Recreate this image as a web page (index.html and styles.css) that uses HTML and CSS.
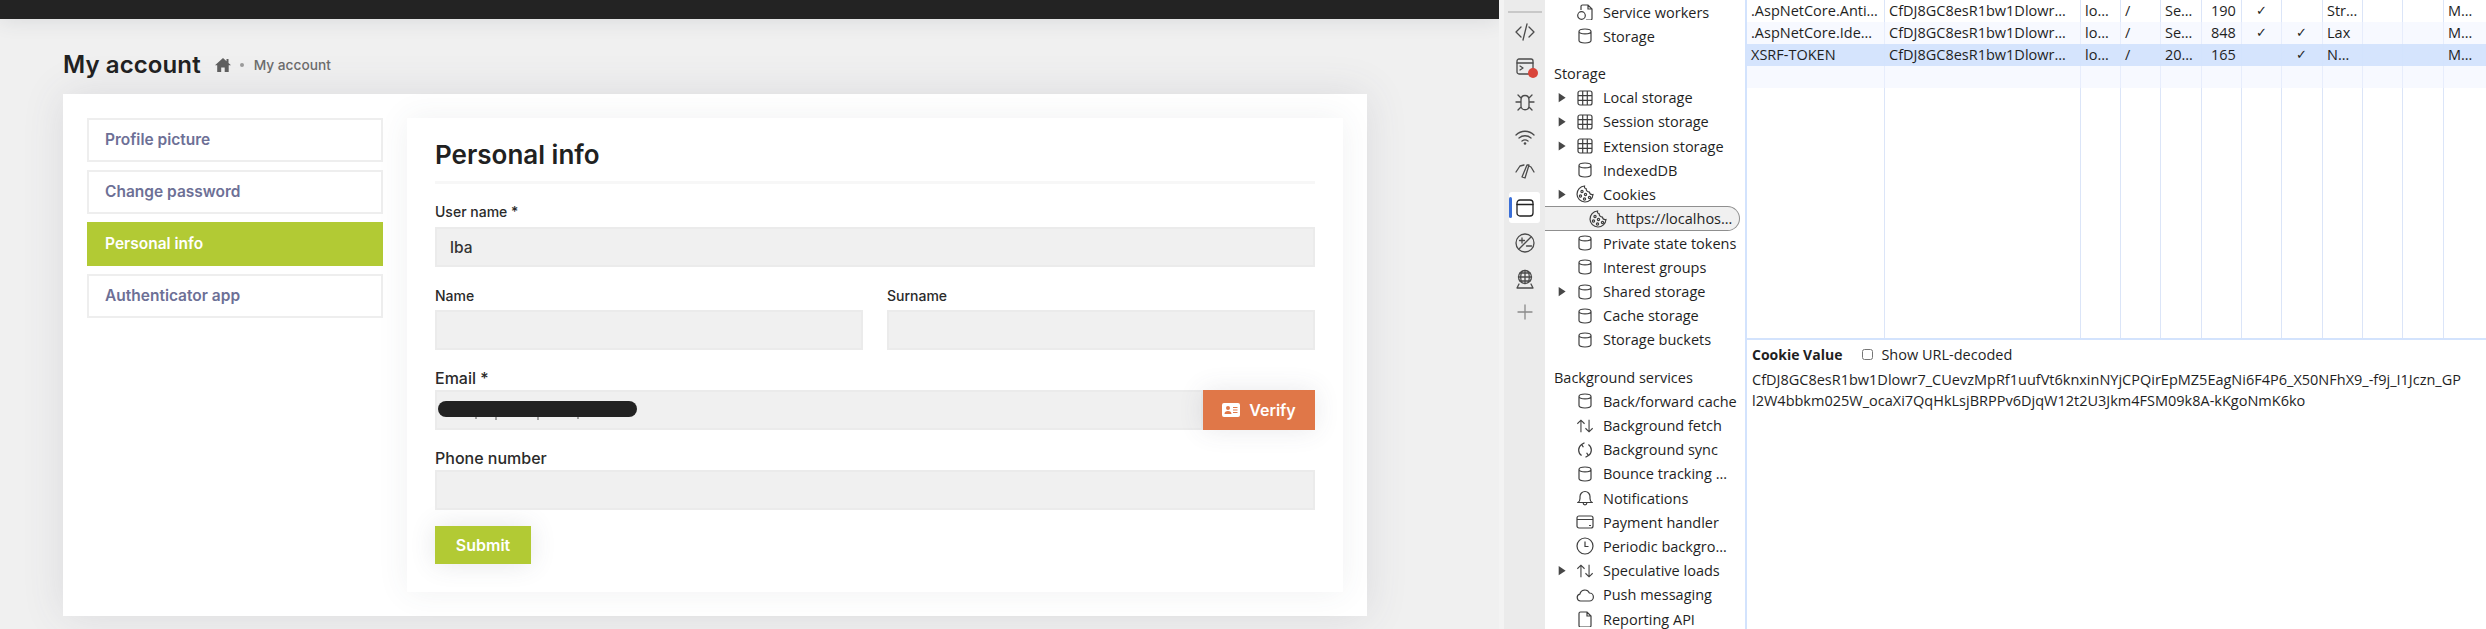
FILE: index.html
```html
<!DOCTYPE html>
<html lang="en">
<head>
<meta charset="utf-8">
<title>My account</title>
<link rel="stylesheet" href="styles.css">
</head>
<body>
<svg class="defs" width="0" height="0" aria-hidden="true">
  <symbol id="db" viewBox="0 0 16 16"><path d="M2 3.400C2 1.900 4.700 1 8 1s6 .9 6 2.400-2.700 2.400-6 2.400-6-.9-6-2.400zM2 3.400v9.200C2 14.100 4.700 15 8 15s6-.9 6-2.400V3.400"/></symbol>
  <symbol id="grid" viewBox="0 0 16 16"><rect x="1" y="1" width="14" height="14" rx="2"/><path d="M5.700 1v14M10.300 1v14M1 5.700h14M1 10.300h14"/></symbol>
  <symbol id="cookie" viewBox="0 0 18 18"><path d="M8.500 1A8 8 0 1 0 17 9.500c-1.800.3-3.300-.7-3.600-2.400C11.600 7 10 5.600 10.200 3.800 9 3.800 8.200 2.500 8.500 1z"/><g class="fill"><circle cx="6" cy="6.500" r="1.100"/><circle cx="4.500" cy="11" r="1.100"/><circle cx="9.500" cy="9.500" r="1.100"/><circle cx="8.500" cy="14" r="1.100"/><circle cx="13.500" cy="12.500" r="1.100"/></g></symbol>
  <symbol id="updown" viewBox="0 0 20 16"><path d="M5.500 15V1.500M1.500 5.500l4-4 4 4M14.500 1v13.500M10.500 10.500l4 4 4-4"/></symbol>
  <symbol id="sync" viewBox="0 0 16 16"><path d="M4.600 2.400a6.800 6.800 0 0 0 0 11.200M11.400 13.600a6.800 6.800 0 0 0 0-11.200"/><path d="M7.500.8 4.600 2.400l1.800 2.800M8.500 15.200l2.900-1.600-1.800-2.800"/></symbol>
  <symbol id="bell" viewBox="0 0 16 16"><path d="M1 12.500c1.400-1 2-2.200 2-4V6.500a5 5 0 0 1 10 0v2c0 1.800.6 3 2 4zM6.200 13c0 2.400 3.600 2.400 3.600 0"/></symbol>
  <symbol id="card" viewBox="0 0 18 14"><rect x="1" y="1" width="16" height="12" rx="2"/><path d="M1 4.500h16M13 10.500h2"/></symbol>
  <symbol id="clock" viewBox="0 0 18 18"><circle cx="9" cy="9" r="8"/><path d="M9 4.500V9.500h3.500"/></symbol>
  <symbol id="cloud" viewBox="0 0 18 14"><path d="M4.500 13a3.500 3.500 0 0 1-.6-6.900A5 5 0 0 1 13.400 5a4 4 0 0 1 0 8z"/></symbol>
  <symbol id="doc" viewBox="0 0 14 16"><path d="M1 2.500A1.500 1.500 0 0 1 2.500 1H9l4 4v9.500a1.500 1.500 0 0 1-1.500 1.500h-9A1.500 1.500 0 0 1 1 14.500zM9 1v4h4"/></symbol>
  <symbol id="worker" viewBox="0 0 16 16"><path d="M4 6V2.500A1.500 1.500 0 0 1 5.500 1H11l4 4v9.500a1.500 1.500 0 0 1-1.500 1.500H9M11 1v4h4"/><circle class="fill" cx="4.500" cy="11.500" r="3.800"/></symbol>
</svg>

<div class="screen">
  <main class="page">
    <div class="topbar"></div>
    <div class="content">
      <header class="crumbs">
        <h1 class="title">My account</h1>
        <svg class="home" viewBox="0 0 16 14"><path d="M8 0 0 7.200h2.200V14h4V9.500h3.500V14h4V7.200H16L13.500 5V1h-2v2.200z"/></svg>
        <span class="dot"></span>
        <span class="crumb">My account</span>
      </header>
      <section class="card">
        <nav class="menu">
          <a class="menu-item">Profile picture</a>
          <a class="menu-item">Change password</a>
          <a class="menu-item active">Personal info</a>
          <a class="menu-item">Authenticator app</a>
        </nav>
        <form class="panel">
          <h2 class="panel-title">Personal info</h2>
          <div class="field first">
            <label class="label">User name *</label>
            <input class="input" value="lba" readonly>
          </div>
          <div class="two">
            <div class="field tight">
              <label class="label small">Name</label>
              <input class="input" readonly>
            </div>
            <div class="field tight">
              <label class="label small">Surname</label>
              <input class="input" readonly>
            </div>
          </div>
          <div class="field large">
            <label class="label big">Email *</label>
            <div class="input-group">
              <input class="input" readonly>
              <svg class="scribble" viewBox="0 0 199 19"><rect width="199" height="16" rx="8"/><path d="M38 16v2M58 16v3M100 16v3M140 16v2"/></svg>
              <button class="btn verify" type="button">
                <svg class="id" viewBox="0 0 18 14"><path fill-rule="evenodd" d="M2 0h14a2 2 0 0 1 2 2v10a2 2 0 0 1-2 2H2a2 2 0 0 1-2-2V2a2 2 0 0 1 2-2zm4 3a2 2 0 1 0 0 4 2 2 0 0 0 0-4zM2.500 11h7c0-2-1.300-3-3.500-3s-3.500 1-3.500 3zM11 4v1h4.500V4zm0 2.500v1h4.500v-1zM11 9v1h4.500V9z"/></svg>
                Verify
              </button>
            </div>
          </div>
          <div class="field large">
            <label class="label big">Phone number</label>
            <input class="input" readonly>
          </div>
          <button class="btn submit" type="button">Submit</button>
        </form>
      </section>
    </div>
  </main>

  <div class="gutter"></div>

  <aside class="activity">
    <div class="activity-top"></div>
    <svg class="act" viewBox="0 0 20 20"><path d="M6 5 1 10l5 5M14 5l5 5-5 5M12 2 8 18"/></svg>
    <span class="act-wrap">
      <svg class="act" viewBox="0 0 20 20"><rect x="2" y="2" width="16" height="15" rx="2"/><path d="M2 6h16M5 9l3 2-3 2"/></svg>
      <span class="badge"></span>
    </span>
    <svg class="act" viewBox="0 0 20 20"><path d="M6 8c0-6 8-6 8 0v6c0 5-8 5-8 0zM6 6 3 3M14 6l3-3M6 10H1M14 10h5M6 15l-3 3M14 15l3 3"/></svg>
    <svg class="act" viewBox="0 0 20 20"><path d="M1 8c5-5 13-5 18 0M4 11c3.500-3 8.500-3 12 0M7 14c2-1.500 4-1.500 6 0"/><circle class="solid" cx="10" cy="16.500" r="1.300"/></svg>
    <svg class="act gauge" viewBox="0 0 20 20"><path d="M1 12 5 6l4-1M19 12l-3-5-2-1M7 17l5-12 2 0-4 13z"/></svg>
    <span class="act-selected">
      <svg class="act" viewBox="0 0 20 20"><rect x="2" y="2" width="16" height="16" rx="3"/><path d="M2 6.500h16"/></svg>
    </span>
    <svg class="act perf" viewBox="0 0 20 20"><circle cx="10" cy="10" r="9"/><path d="M4 16 16 4M4.500 7.500h5M7 5v5M11.500 13h5"/></svg>
    <svg class="act" viewBox="0 0 20 20"><circle cx="10" cy="8" r="6.500"/><path d="M3.500 8h13M10 1.500v13M5 4h10M5 12h10M7 2.500c-2 4-2 7 0 11M13 2.500c2 4 2 7 0 11M4 15l-2 4h16l-2-4"/></svg>
    <svg class="act plus" viewBox="0 0 20 20"><path d="M10 3v14M3 10h14"/></svg>
  </aside>

  <aside class="tree">
    <div class="row"><i class="caret-slot"></i><svg class="ico"><use href="#worker"/></svg>Service workers</div>
    <div class="row"><i class="caret-slot"></i><svg class="ico"><use href="#db"/></svg>Storage</div>
    <div class="row heading">Storage</div>
    <div class="row"><i class="caret-slot caret"></i><svg class="ico"><use href="#grid"/></svg>Local storage</div>
    <div class="row"><i class="caret-slot caret"></i><svg class="ico"><use href="#grid"/></svg>Session storage</div>
    <div class="row"><i class="caret-slot caret"></i><svg class="ico"><use href="#grid"/></svg>Extension storage</div>
    <div class="row"><i class="caret-slot"></i><svg class="ico"><use href="#db"/></svg>IndexedDB</div>
    <div class="row"><i class="caret-slot caret"></i><svg class="ico ico-wide"><use href="#cookie"/></svg>Cookies</div>
    <div class="row selected"><svg class="ico ico-wide"><use href="#cookie"/></svg>https://localhos…</div>
    <div class="row"><i class="caret-slot"></i><svg class="ico"><use href="#db"/></svg>Private state tokens</div>
    <div class="row"><i class="caret-slot"></i><svg class="ico"><use href="#db"/></svg>Interest groups</div>
    <div class="row"><i class="caret-slot caret"></i><svg class="ico"><use href="#db"/></svg>Shared storage</div>
    <div class="row"><i class="caret-slot"></i><svg class="ico"><use href="#db"/></svg>Cache storage</div>
    <div class="row"><i class="caret-slot"></i><svg class="ico"><use href="#db"/></svg>Storage buckets</div>
    <div class="row heading">Background services</div>
    <div class="row"><i class="caret-slot"></i><svg class="ico"><use href="#db"/></svg>Back/forward cache</div>
    <div class="row"><i class="caret-slot"></i><svg class="ico ico-wide"><use href="#updown"/></svg>Background fetch</div>
    <div class="row"><i class="caret-slot"></i><svg class="ico"><use href="#sync"/></svg>Background sync</div>
    <div class="row"><i class="caret-slot"></i><svg class="ico"><use href="#db"/></svg>Bounce tracking …</div>
    <div class="row"><i class="caret-slot"></i><svg class="ico"><use href="#bell"/></svg>Notifications</div>
    <div class="row"><i class="caret-slot"></i><svg class="ico ico-wide"><use href="#card"/></svg>Payment handler</div>
    <div class="row"><i class="caret-slot"></i><svg class="ico ico-wide"><use href="#clock"/></svg>Periodic backgro…</div>
    <div class="row"><i class="caret-slot caret"></i><svg class="ico ico-wide"><use href="#updown"/></svg>Speculative loads</div>
    <div class="row"><i class="caret-slot"></i><svg class="ico ico-wide"><use href="#cloud"/></svg>Push messaging</div>
    <div class="row"><i class="caret-slot"></i><svg class="ico"><use href="#doc"/></svg>Reporting API</div>
  </aside>

  <section class="cookies">
    <div class="table">
      <div class="columns">
        <i></i><i></i><i></i><i></i><i></i><i></i><i></i><i></i><i></i><i></i><i></i><i></i>
      </div>
      <div class="tr">
        <span>.AspNetCore.Anti…</span><span>CfDJ8GC8esR1bw1Dlowr…</span><span>lo…</span><span>/</span><span>Se…</span><span class="num">190</span><span class="chk">✓</span><span></span><span>Str…</span><span></span><span></span><span>M…</span>
      </div>
      <div class="tr alt">
        <span>.AspNetCore.Ide…</span><span>CfDJ8GC8esR1bw1Dlowr…</span><span>lo…</span><span>/</span><span>Se…</span><span class="num">848</span><span class="chk">✓</span><span class="chk">✓</span><span>Lax</span><span></span><span></span><span>M…</span>
      </div>
      <div class="tr sel">
        <span>XSRF-TOKEN</span><span>CfDJ8GC8esR1bw1Dlowr…</span><span>lo…</span><span>/</span><span>20…</span><span class="num">165</span><span></span><span class="chk">✓</span><span>N…</span><span></span><span></span><span>M…</span>
      </div>
      <div class="tr alt"><span></span></div>
    </div>
    <div class="details">
      <div class="details-head">
        <strong>Cookie Value</strong>
        <label class="decoded"><input type="checkbox" class="check">Show URL-decoded</label>
      </div>
      <p class="value">CfDJ8GC8esR1bw1Dlowr7_CUevzMpRf1uufVt6knxinNYjCPQirEpMZ5EagNi6F4P6_X50NFhX9_-f9j_I1Jczn_GP<br>l2W4bbkm025W_ocaXi7QqHkLsjBRPPv6DjqW12t2U3Jkm4FSM09k8A-kKgoNmK6ko</p>
    </div>
  </section>
</div>
</body>
</html>
```
FILE: styles.css
```css
* { box-sizing: border-box; }
html, body { margin: 0; height: 629px; overflow: hidden; }
body { background: #f0f0f0; }
.defs { position: absolute; }

.screen { display: flex; width: 2486px; height: 629px; }

/* ---- page ---- */
.page {
  width: 1499px; flex: none; height: 629px; overflow: hidden;
  background: #f0f0f0;
  font-family: Inter, "Liberation Sans", sans-serif;
  color: #212121;
}
.topbar { height: 19px; background: #232323; box-shadow: 0 0 22px rgba(60, 65, 80, .14); position: relative; }
.content { padding: 27px 0 0 63px; width: 1367px; }

.crumbs { display: flex; align-items: center; height: 48px; padding-bottom: 11px; }
.title { margin: 0; font-size: 24px; font-weight: 600; line-height: 26px; letter-spacing: .1px; color: #212121; }
.home { width: 16px; height: 14px; margin-left: 14px; fill: #5f5f5f; }
.dot { width: 4px; height: 4px; border-radius: 50%; background: #9a9a9a; margin: 0 10px 0 9px; }
.crumb { font-size: 13.700px; font-weight: 500; color: #6b6b6b; }

.card {
  display: flex; gap: 24px; width: 1304px; padding: 24px; background: #fff;
  box-shadow: 0 0 40px rgba(70, 75, 95, .12);
}
.menu { width: 296px; flex: none; display: flex; flex-direction: column; gap: 8px; }
.menu-item {
  display: flex; align-items: center; height: 44px; padding: 0 0 2px 16px;
  border: 2px solid #eeeeee; background: #fff;
  font-size: 15.500px; font-weight: 600; color: #6d7096;
}
.menu-item.active { background: #b2ca34; border-color: #b2ca34; color: #fff; }

.panel {
  flex: 1; padding: 18px 28px 28px; background: #fff;
  box-shadow: 0 0 30px rgba(70, 75, 95, .08);
}
.panel-title {
  margin: 0; height: 48px; padding-top: 5px; border-bottom: 3px solid #f7f7f7;
  font-size: 26px; font-weight: 600; line-height: 28px; color: #212121;
}
.field { display: flex; flex-direction: column; flex: 1; }
.field.first { margin-top: 18px; }
.field.tight { margin-top: 19px; }
.field.large { margin-top: 18px; }
.two { display: flex; gap: 24px; }
.label { height: 20px; line-height: 20px; font-size: 14px; font-weight: 500; color: #2a2a2a; margin-bottom: 5px; }
.label.small { font-size: 14px; margin-bottom: 4px; }
.label.big { font-size: 16px; margin-bottom: 2px; }
.input {
  display: block; width: 100%; height: 40px; padding: 0 13px;
  background: #f0f0f0; border: 2px solid #ebebeb; border-radius: 0; outline: 0;
  font: 500 15.500px Inter, "Liberation Sans", sans-serif; color: #333;
}
.input-group { display: flex; position: relative; }
.input-group .input { flex: 1; min-width: 0; }
.scribble { position: absolute; left: 3px; top: 11px; width: 199px; height: 19px; fill: #222; stroke: #555; stroke-width: 1; }
.scribble rect { stroke: none; }
.btn {
  border: 0; border-radius: 0; color: #fff; cursor: pointer;
  font: 600 16px Inter, "Liberation Sans", sans-serif;
  display: flex; align-items: center; justify-content: center;
}
.verify { width: 112px; height: 40px; flex: none; gap: 9px; background: #e07748; box-shadow: 0 0 26px rgba(70, 75, 95, .12); }
.id { width: 18px; height: 14px; fill: #fff; }
.submit { width: 96px; height: 38px; margin-top: 16px; background: #b2ca34; box-shadow: 0 0 26px rgba(70, 75, 95, .14); }

/* ---- devtools ---- */
.gutter { width: 5px; flex: none; background: #f3f3f3; }
.activity {
  width: 41px; flex: none; height: 629px; background: #ebebeb;
  display: flex; flex-direction: column; align-items: center;
  position: relative;
}
.activity-top { width: 34px; height: 2px; margin-top: 11px; background: #c8c8c8; margin-bottom: 9px; }
.act { width: 20px; height: 20px; flex: none; margin-bottom: 15px; fill: none; stroke: #4b4b4b; stroke-width: 1.300; stroke-linecap: round; stroke-linejoin: round; }
.act .solid { fill: #4b4b4b; stroke: none; }
.act.plus { stroke: #8a8a8a; margin-top: -2px; }
.act.gauge { margin: -2px 0 16px; }
.act.perf { margin-bottom: 16px; }
.act-wrap { position: relative; display: block; height: 35px; }
.badge { position: absolute; right: -3px; top: 11px; width: 10px; height: 10px; border-radius: 50%; background: #d9453a; }
.act-selected {
  width: 31px; height: 31px; margin: -4px 0 10px; background: #fff; border-radius: 3px;
  display: flex; align-items: center; justify-content: center; position: relative;
}
.act-selected .act { margin: 0; stroke: #222; }
.act-selected::before { content: ""; position: absolute; left: 0; top: 5px; width: 3px; height: 21px; background: #3a6fd8; border-radius: 2px; }

.tree {
  width: 200px; flex: none; height: 629px; background: #fff; overflow: hidden;
  font-family: "Open Sans", "Liberation Sans", sans-serif; font-size: 14.500px; color: #1f1f1f;
}
.row { display: flex; align-items: center; height: 24.200px; padding-left: 12px; white-space: nowrap; }
.heading { margin-top: 13px; padding-left: 9px; }
.caret-slot { display: block; width: 12px; height: 12px; flex: none; margin-right: 7px; }
.caret { background: #474747; clip-path: polygon(14% 12%, 72% 50%, 14% 88%); }
.ico { width: 16px; height: 16px; flex: none; margin: 0 10px 0 1px; fill: none; stroke: #3f3f3f; stroke-width: 1.200; }
.ico-wide { width: 18px; height: 18px; margin: 0 9px 0 0; }
.tree .fill, .ico .fill { fill: #3f3f3f; stroke: none; }
.row.selected {
  width: 195px; height: 25px; margin-top: -.400px; padding-left: 44px; background: #f0f0f0;
  border: 1px solid #8f8f8f; border-left: 0; border-radius: 0 13px 13px 0;
}

.cookies {
  flex: 1; min-width: 0; height: 629px; background: #fff;
  border-left: 2px solid #d3e3fd;
  font-family: "Open Sans", "Liberation Sans", sans-serif; font-size: 14.500px; color: #1f1f1f;
  display: flex; flex-direction: column;
}
.table { position: relative; height: 340px; flex: none; border-bottom: 2px solid #d3e3fd; }
.columns, .tr {
  display: grid;
  grid-template-columns: 138px 196px 40px 40px 41px 40px 40px 41px 40px 40px 41px 1fr;
}
.columns { position: absolute; inset: 0; }
.columns i { border-right: 1px solid #dbe5f8; }
.columns i:last-child { border-right: 0; }
.tr { position: relative; height: 22px; line-height: 22px; white-space: nowrap; }
.tr span { padding-left: 4px; overflow: hidden; }
.tr .num { padding-left: 9px; }
.tr .chk { padding-left: 14px; font-family: "DejaVu Sans", sans-serif; font-size: 13px; }
.tr.alt { background: rgba(240, 244, 255, .55); }
.tr.sel { background: rgba(211, 227, 253, .95); }

.details { padding: 6px 0 0 5px; }
.details-head { display: flex; align-items: center; height: 16px; }
.details-head strong { font-weight: 700; font-size: 14px; margin-right: 20px; }
.decoded { display: flex; align-items: center; }
.check { width: 11px; height: 11px; margin: 0 8px 0 0; }
.value { margin: 7px 0 0; line-height: 21px; white-space: nowrap; }
```
